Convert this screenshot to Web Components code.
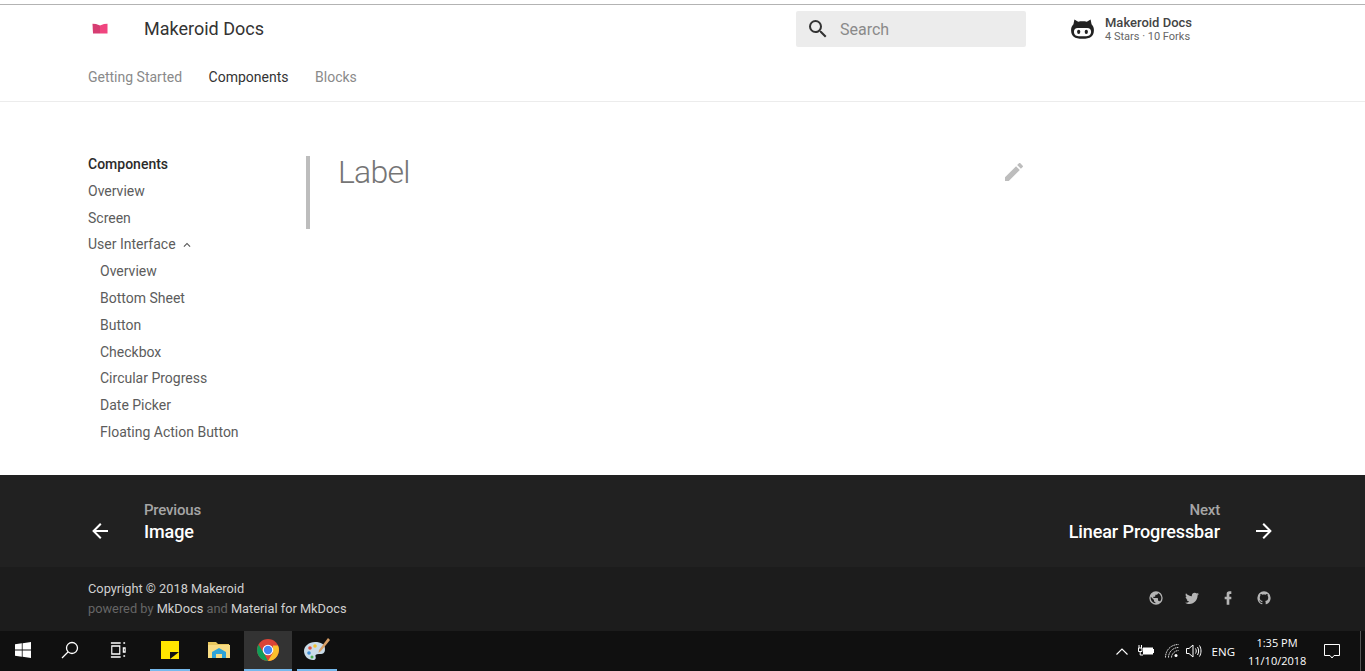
<!DOCTYPE html>
<html lang="en">
<head>
<meta charset="utf-8">
<title>Makeroid Docs</title>
<style>
  html, body { margin: 0; height: 100%; overflow: hidden; background: #fff; }
  body { display: flex; flex-direction: column; height: 671px; font-family: Roboto, "Liberation Sans", sans-serif; }
  doc-main { flex: 1; min-height: 0; }
</style>
</head>
<body>
<doc-header></doc-header>
<doc-main>
  <doc-sidebar></doc-sidebar>
  <doc-article title-text="Label"></doc-article>
</doc-main>
<doc-footer></doc-footer>
<win-taskbar></win-taskbar>

<script>
// Material icon paths shared by the components.
const ICONS = {
  search: 'M15.5 14h-.79l-.28-.27A6.471 6.471 0 0 0 16 9.5 6.5 6.5 0 1 0 9.5 16c1.61 0 3.09-.59 4.23-1.57l.27.28v.79l5 4.99L20.49 19l-4.99-5zm-6 0C7.01 14 5 11.99 5 9.5S7.01 5 9.5 5 14 7.01 14 9.5 11.99 14 9.5 14z',
  pencil: 'M3 17.25V21h3.75L17.81 9.94l-3.75-3.75L3 17.25zM20.71 7.04c.39-.39.39-1.02 0-1.41l-2.34-2.34c-.39-.39-1.02-.39-1.41 0l-1.83 1.83 3.75 3.75 1.83-1.83z',
  back: 'M20 11v2H8l5.5 5.5-1.42 1.42L4.16 12l7.92-7.92L13.5 5.5 8 11h12z',
  forward: 'M4 11v2h12l-5.5 5.5 1.42 1.42L19.84 12l-7.92-7.92L10.5 5.5 16 11H4z',
  chevron: 'M7.41 15.41L12 10.83l4.59 4.58L18 14l-6-6-6 6z',
  twitter: 'M22.46 6c-.77.35-1.6.58-2.46.69.88-.53 1.56-1.37 1.88-2.38-.83.5-1.75.85-2.72 1.05C18.37 4.5 17.26 4 16 4c-2.35 0-4.27 1.92-4.27 4.29 0 .34.04.67.11.98C8.28 9.09 5.11 7.38 3 4.79c-.37.63-.58 1.37-.58 2.15 0 1.49.75 2.81 1.91 3.56-.71 0-1.37-.2-1.95-.5v.03c0 2.08 1.48 3.82 3.44 4.21a4.22 4.22 0 0 1-1.93.07 4.28 4.28 0 0 0 4 2.98 8.521 8.521 0 0 1-5.33 1.84c-.34 0-.68-.02-1.02-.06C3.44 20.29 5.7 21 8.12 21 16 21 20.33 14.46 20.33 8.79c0-.19 0-.37-.01-.56.84-.6 1.56-1.36 2.14-2.23z',
  facebook: 'M17 2v4h-2c-.7 0-1 .8-1 1.5V10h3v4h-3v8h-4v-8H7v-4h3V6a4 4 0 0 1 4-4h3z',
  github: 'M12 2A10 10 0 0 0 2 12c0 4.42 2.87 8.17 6.84 9.5.5.08.66-.23.66-.5v-1.69c-2.77.6-3.36-1.34-3.36-1.34-.46-1.16-1.11-1.47-1.11-1.47-.91-.62.07-.6.07-.6 1 .07 1.53 1.03 1.53 1.03.87 1.52 2.34 1.07 2.91.83.09-.65.35-1.09.63-1.34-2.22-.25-4.55-1.11-4.55-4.92 0-1.11.38-2 1.03-2.71-.1-.25-.45-1.29.1-2.64 0 0 .84-.27 2.75 1.02.79-.22 1.65-.33 2.5-.33.85 0 1.71.11 2.5.33 1.91-1.29 2.75-1.02 2.75-1.02.55 1.35.2 2.39.1 2.64.65.71 1.03 1.6 1.03 2.71 0 3.82-2.34 4.66-4.57 4.91.36.31.69.92.69 1.85V21c0 .27.16.59.67.5C19.14 20.16 22 16.42 22 12A10 10 0 0 0 12 2z',
  globe: 'M12 2a10 10 0 1 0 0 20 10 10 0 0 0 0-20zm-1 17.9A8 8 0 0 1 4.2 10.2L9 15v1c0 1.1.9 2 2 2v1.9zm6.9-2.5c-.3-.8-1-1.4-1.9-1.4h-1v-3c0-.6-.4-1-1-1H8v-2h2c.6 0 1-.4 1-1V7h2c1.1 0 2-.9 2-2v-.4a8 8 0 0 1 2.9 12.8z'
}

/**
 * Builds an inline svg for one of the named icons.
 *
 * @param {string} name - The icon's key in ICONS.
 * @param {number} size - The width and height in pixels.
 * @returns {string} The svg markup.
 */
const icon = (name, size) => `<svg width="${size}" height="${size}" viewBox="0 0 24 24" fill="currentColor" aria-hidden="true"><path d="${ICONS[name]}"/></svg>`

customElements.define('doc-header',
  /**
   * The top bar with logo, search, repository and tabs.
   */
  class extends HTMLElement {
    constructor () {
      super()
      this.attachShadow({ mode: 'open' }).innerHTML = `
        <style>
          :host { display: block; height: 102px; box-sizing: border-box; padding: 4px 88px 0; border-bottom: 1px solid #ececec; background: linear-gradient(#fff 4px, #b3b3b3 4px, #b3b3b3 5px, #fff 5px); color: #333; }
          .row { display: flex; align-items: center; height: 50px; }
          .brand { width: 56px; display: flex; align-items: center; padding: 0 0 2px 4px; box-sizing: border-box; }
          .title { flex: 1; font-size: 18px; color: #333; padding-bottom: 2px; }
          .search { width: 230px; height: 36px; background: #ececec; border-radius: 2px; display: flex; align-items: center; box-sizing: border-box; padding-left: 10px; color: #333; font-size: 16px; }
          .search span { margin-left: 10px; color: #8a8a8a; }
          .repo { width: 251px; box-sizing: border-box; padding-left: 45px; display: flex; align-items: center; }
          .repo .txt { margin: 1px 0 0 11px; line-height: 13.500px; }
          .repo b { display: block; font-weight: 500; font-size: 13px; color: #444; }
          .repo small { display: block; font-size: 11px; color: #666; }
          nav { display: flex; gap: 26.5px; margin-top: 5px; font-size: 14px; color: #8a8a8a; height: 36px; align-items: center; }
          nav .on { color: #333; }
        </style>
        <div class="row">
          <div class="brand">
            <svg width="16" height="11" viewBox="0 0 16 11"><path d="M8 2.500 12 1 15.500.8 15.500 10.500 8 10.500Z" fill="#f0457f"/><path d="M.5.800 4 1 8 2.500 8 10.500 1 10.500Z" fill="#d63d72"/></svg>
          </div>
          <div class="title">Makeroid Docs</div>
          <div class="search">${icon('search', 24)}<span>Search</span></div>
          <div class="repo">
            <svg width="23" height="20" viewBox="0 0 24 21"><path fill="#222" d="M3.500.5 7.500 2.800C8.800 2.500 10.300 2.400 12 2.400s3.200.1 4.500.4L20.500.5 21.500 5.500C23 7 24 9 24 11.500c0 6.500-3.500 9.300-12 9.300S0 18 0 11.500C0 9 1 7 2.500 5.500Z"/><path fill="#fff" d="M7 9.500h10c2.500 0 4 1.500 4 3.800s-1.500 4.700-5 4.700H8c-3.500 0-5-2.400-5-4.700s1.500-3.800 4-3.800Z"/><ellipse cx="8" cy="13.500" rx="1.700" ry="2.300" fill="#222"/><ellipse cx="16" cy="13.500" rx="1.700" ry="2.300" fill="#222"/></svg>
            <div class="txt"><b>Makeroid Docs</b><small>4 Stars · 10 Forks</small></div>
          </div>
        </div>
        <nav><span>Getting Started</span><span class="on">Components</span><span>Blocks</span></nav>
      `
    }
  }
)

customElements.define('doc-main',
  /**
   * The white middle part, holding sidebar and article.
   */
  class extends HTMLElement {
    constructor () {
      super()
      this.attachShadow({ mode: 'open' }).innerHTML = `
        <style>
          :host { display: flex; padding: 49px 0 0 88px; box-sizing: border-box; overflow: hidden; background: #fff; }
        </style>
        <slot></slot>
      `
    }
  }
)

customElements.define('doc-sidebar',
  /**
   * The navigation list on the left.
   */
  class extends HTMLElement {
    constructor () {
      super()
      const top = ['Overview', 'Screen']
      const sub = ['Overview', 'Bottom Sheet', 'Button', 'Checkbox', 'Circular Progress', 'Date Picker', 'Floating Action Button']
      this.attachShadow({ mode: 'open' }).innerHTML = `
        <style>
          :host { display: block; width: 218px; flex: none; font-size: 14px; line-height: 26.8px; color: #5c5c5c; }
          b { display: block; font-weight: 500; color: #2b2b2b; }
          div { white-space: nowrap; }
          .toggle { display: flex; align-items: center; gap: 4px; }
          .toggle svg { color: #555; }
          .sub div { padding-left: 12px; }
        </style>
        <b>Components</b>
        ${top.map(t => `<div>${t}</div>`).join('')}
        <div class="toggle">User Interface ${icon('chevron', 14)}</div>
        <div class="sub">${sub.map(t => `<div>${t}</div>`).join('')}</div>
      `
    }
  }
)

customElements.define('doc-article',
  /**
   * The page content with its scroll bar and edit pencil.
   */
  class extends HTMLElement {
    constructor () {
      super()
      this.attachShadow({ mode: 'open' }).innerHTML = `
        <style>
          :host { display: flex; width: 720px; height: 73px; margin-top: 5px; box-sizing: border-box; border-left: 4px solid #bdbdbd; padding-left: 28px; justify-content: space-between; }
          h1 { margin: 0; font-size: 32px; font-weight: 300; line-height: 32px; color: #757575; letter-spacing: -.8px; }
          svg { color: #bdbdbd; margin: 4px 0 0; }
        </style>
        <h1>${this.getAttribute('title-text')}</h1>
        ${icon('pencil', 24)}
      `
    }
  }
)

customElements.define('doc-footer',
  /**
   * The dark footer with previous/next links, copyright and social icons.
   */
  class extends HTMLElement {
    constructor () {
      super()
      this.attachShadow({ mode: 'open' }).innerHTML = `
        <style>
          :host { display: block; color: #fff; flex: none; }
          .pager { height: 92px; background: #212121; box-sizing: border-box; padding: 0 89px 0 88px; display: flex; justify-content: space-between; align-items: center; }
          .link { display: flex; align-items: center; }
          .link svg { margin: 20px 0 0; }
          .txt { margin-top: 2px; }
          .prev .txt { margin-left: 32px; }
          .next .txt { margin-right: 32px; text-align: right; }
          small { display: block; font-size: 15px; line-height: 19px; color: #a6a6a6; font-weight: 500; letter-spacing: -.2px; }
          strong { display: block; font-weight: 500; font-size: 18px; line-height: 23px; letter-spacing: -.1px; }
          .meta { height: 64px; background: #1c1c1c; box-sizing: border-box; padding: 12px 89px 0 88px; display: flex; justify-content: space-between; font-size: 12.8px; line-height: 20px; color: #d0d0d0; }
          .dim { color: #666; }
          .social { display: flex; gap: 20px; padding: 11px 4px 0 0; color: #b5b5b5; }
        </style>
        <div class="pager">
          <div class="link prev">${icon('back', 24)}<div class="txt"><small>Previous</small><strong>Image</strong></div></div>
          <div class="link next"><div class="txt"><small>Next</small><strong>Linear Progressbar</strong></div>${icon('forward', 24)}</div>
        </div>
        <div class="meta">
          <div>Copyright © 2018 Makeroid<br><span class="dim">powered by</span> MkDocs <span class="dim">and</span> Material for MkDocs</div>
          <div class="social">${icon('globe', 16)}${icon('twitter', 16)}${icon('facebook', 16)}${icon('github', 16)}</div>
        </div>
      `
    }
  }
)

customElements.define('win-taskbar',
  /**
   * The Windows 10 taskbar at the bottom of the screenshot.
   */
  class extends HTMLElement {
    constructor () {
      super()
      this.attachShadow({ mode: 'open' }).innerHTML = `
        <style>
          :host { display: flex; flex: none; height: 40px; background: #101010; color: #fff; font-family: "Open Sans", "Liberation Sans", sans-serif; font-size: 11px; align-items: stretch; }
          .slot { display: flex; align-items: center; justify-content: center; box-sizing: border-box; border-bottom: 2px solid transparent; }
          .sys { width: 48px; }
          .app { width: 40px; }
          .on { border-bottom-color: #76b9ed; }
          .active { width: 48px; background: #333; }
          .spacer { flex: 1; }
          .tray { display: flex; align-items: center; }
          .eng { margin: 0 13px 0 10px; font-size: 11.500px; }
          .clock { width: 58px; text-align: center; line-height: 18px; margin-top: 2px; white-space: nowrap; }
          .note { width: 54px; box-sizing: border-box; padding-right: 2px; display: flex; justify-content: center; }
          .edge { width: 5px; border-left: 1px solid #555; box-sizing: border-box; }
        </style>
        <div class="slot" style="width:46px"><svg width="16" height="16" viewBox="0 0 16 16" fill="#fff"><path d="M0 2.300 6.800 1.300V7.600H0ZM7.600 1.200 16 0V7.600H7.600ZM0 8.400H6.800V14.700L0 13.700ZM7.600 8.400H16V16L7.600 14.800Z"/></svg></div>
        <div class="slot sys"><svg width="18" height="18" viewBox="0 0 18 18" fill="none" stroke="#fff" stroke-width="1.300"><circle cx="11" cy="7" r="5.500"/><path d="M7 11 1 17"/></svg></div>
        <div class="slot sys"><svg width="16" height="16" viewBox="0 0 18 16" fill="none" stroke="#fff" stroke-width="1.300" preserveAspectRatio="none"><path d="M1 1H12M1 15H12M2 4H11V12H2ZM15 1H17M15 6H17V10H15ZM15 14H17"/></svg></div>
        <div class="slot app on" style="margin-left:8px"><svg width="18" height="18" viewBox="0 0 18 18"><path fill="#ffe600" d="M0 0H18V18H0Z"/><path fill="#111" d="M9 18V11H18Z"/></svg></div>
        <div class="slot app" style="margin-left:9px"><svg width="22" height="18" viewBox="0 0 22 18"><path fill="#e8c75e" d="M0 1H8L10 3H21V17H0Z"/><path fill="#f8dc84" d="M0 4H22V17H0Z"/><path fill="#2ea3d8" d="M4 17V11L11 7 18 11V17H14V13H8V17Z"/></svg></div>
        <div class="slot app on active" style="margin-left:5px"><svg width="22" height="22" viewBox="0 0 22 22"><circle cx="11" cy="11" r="11" fill="#db4437"/><path fill="#0f9d58" d="M11 22A11 11 0 0 1 1.500 5.500L6.500 13.500 11 22Z"/><path fill="#fbc02d" d="M11 22 16 13.500V6.500H21A11 11 0 0 1 11 22Z"/><circle cx="11" cy="11" r="5.300" fill="#fff"/><circle cx="11" cy="11" r="4.200" fill="#4285f4"/></svg></div>
        <div class="slot app on" style="margin-left:5px"><svg width="26" height="24" viewBox="0 0 26 24"><path fill="#c9dbe8" d="M11 4C5 4 0 8 0 13s4 9 9 9c3 0 3-2 2.500-3.500S12 16 15 16s6 0 6-5-4-7-10-7Z"/><circle cx="6" cy="10" r="1.800" fill="#e0503f"/><circle cx="11" cy="8" r="1.800" fill="#f2c230"/><circle cx="5" cy="15" r="1.800" fill="#3f8fd8"/><circle cx="8" cy="19" r="1.500" fill="#4caf50"/><path fill="#d9a066" d="M24 0 26 2 17 13 14.500 15 15 12Z"/></svg></div>
        <div class="spacer"></div>
        <div class="tray">
          <svg width="12" height="7" viewBox="0 0 12 7" fill="none" stroke="#fff" stroke-width="1.100" style="margin-right:10px"><path d="M.5 6.500 6 1l5.500 5.500"/></svg>
          <svg width="16" height="12" viewBox="0 0 16 12" style="margin-right:11px"><path fill="none" stroke="#fff" d="M1 0V3M3.500 0V3M.5 3H4V6.500H.5ZM2.200 6.500V10H5"/><path fill="#fff" d="M5 2.500H15V4H16V8H15V9.500H5Z"/></svg>
          <svg width="14" height="14" viewBox="0 0 14 14" fill="none" stroke="#ddd" stroke-dasharray="1.400 .6" style="margin-right:7px"><path d="M.5 13.500C.5 6 6 .5 13.500.5M3.500 13.500C3.500 8 8 3.500 13.500 3.500M6.500 13.500C6.500 10 10 6.500 13.500 6.500"/><circle cx="11" cy="11.500" r="1.500" fill="#fff" stroke="none"/></svg>
          <svg width="16" height="14" viewBox="0 0 16 14" fill="none" stroke="#fff"><path d="M.5 4.500H3L7 1V13L3 9.500H.500ZM9.500 4.500C10.500 6 10.500 8 9.500 9.500M11.500 3C13 5.500 13 8.500 11.500 11M13.500 1.500C15.500 5 15.500 9 13.500 12.500"/></svg>
          <span class="eng">ENG</span>
          <div class="clock">1:35 PM<br>11/10/2018</div>
          <div class="note"><svg width="16" height="15" viewBox="0 0 16 15" fill="none" stroke="#fff"><path d="M.5.500H15.500V11.500H10L8 14 6 11.500H.5Z"/></svg></div>
          <div class="edge" style="align-self:stretch"></div>
        </div>
      `
    }
  }
)
</script>
</body>
</html>
